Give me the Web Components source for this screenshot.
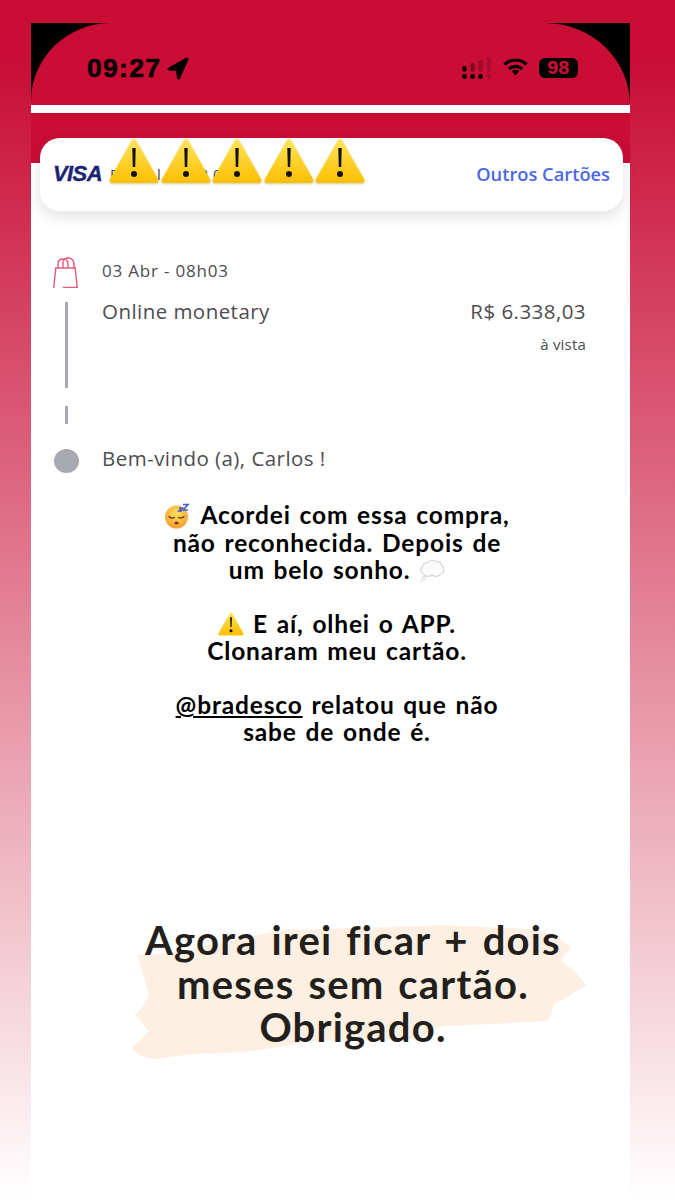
<!DOCTYPE html>
<html lang="pt-BR">
<head>
<meta charset="utf-8">
<title>Story</title>
<style>
  html, body { margin: 0; padding: 0; }
</style>
</head>
<body>

<story-page>
  <status-bar></status-bar>
  <card-header></card-header>
  <tx-row date="03 Abr - 08h03" name="Online monetary" price="R$ 6.338,03" terms="à vista"></tx-row>
  <welcome-row>Bem-vindo (a), Carlos !</welcome-row>
  <story-note>
    <p><sleep-icon></sleep-icon> Acordei com essa compra,<br>não reconhecida. Depois de<br>um belo sonho. <cloud-icon></cloud-icon></p>
    <p><warn-icon size="26"></warn-icon> E aí, olhei o APP.<br>Clonaram meu cartão.</p>
    <p><u>@bradesco</u> relatou que não<br>sabe de onde é.</p>
  </story-note>
  <closing-note>Agora irei ficar + dois<br>meses sem cartão.<br>Obrigado.</closing-note>
</story-page>

<script>
class StoryPage extends HTMLElement {
  constructor() {
    super();
    this.attachShadow({ mode: 'open' }).innerHTML = `
      <style>
        :host { display: block; width: 675px; height: 1200px; overflow: hidden;
                background: linear-gradient(#c90d35 0, #c90d35 60px, #ffffff 1200px);
                padding: 23px 45px 0 31px; box-sizing: border-box; }
        .screen { width: 599px; height: 1177px; background: #fff; }
      </style>
      <div class="screen"><slot></slot></div>`;
  }
}

class StatusBar extends HTMLElement {
  constructor() {
    super();
    this.attachShadow({ mode: 'open' }).innerHTML = `
      <style>
        :host { display: block; background: #000; border-bottom: 8px solid #fff; }
        .bar { height: 82px; background: #c90d35; border-radius: 80px 85px 0 0 / 78px 82px 0 0;
               display: flex; align-items: flex-start; padding: 30px 52px 0 56px; box-sizing: border-box; }
        .time { font: bold 26.5px/30px "Liberation Sans", sans-serif; color: #000; letter-spacing: 1.3px;
                -webkit-text-stroke: .5px #000; }
        .arrow { margin: 4px 0 0 6px; }
        .right { margin-left: auto; display: flex; align-items: flex-start; gap: 11px; margin-top: 5px; }
        .batt { width: 39px; height: 20px; background: #000; border-radius: 6px; color: #c90d35;
                font: bold 19px/20px "Liberation Sans", sans-serif; text-align: center; letter-spacing: .5px;
                -webkit-text-stroke: .3px #c90d35; }
      </style>
      <div class="bar">
        <span class="time">09:27</span>
        <svg class="arrow" width="22" height="23" viewBox="0 0 21 22">
          <path d="M19 2 L2 11.500 L10 12 L11 20 Z" fill="#000" stroke="#000" stroke-width="3" stroke-linejoin="round"/>
        </svg>
        <div class="right">
          <svg width="30" height="24" viewBox="0 0 30 24" style="margin-top:-1px">
            <g fill="#000">
              <circle cx="2.500" cy="19.500" r="2.400"/><circle cx="10.500" cy="19.500" r="2.400"/><circle cx="18.500" cy="19.500" r="2.400"/>
              <rect x="0.500" y="9" width="4" height="5.500" rx="1.500"/>
            </g>
            <circle cx="27" cy="19.500" r="2.400" fill="#8a0a25" opacity=".55"/>
            <rect x="8.500" y="6" width="4" height="8.500" rx="1.500" fill="#7a0a22"/>
            <rect x="16.500" y="3" width="4" height="11.500" rx="1.500" fill="#9a0b2b"/>
            <rect x="25" y="0" width="4" height="14.500" rx="1.500" fill="#a80c2e"/>
          </svg>
          <svg width="25" height="18" viewBox="0 0 25 18">
            <g fill="none" stroke="#000" stroke-width="3.200">
              <path d="M1.500 6.500 C7.500 0.500 17.500 0.500 23.500 6.500"/>
              <path d="M6 11 C9.500 7.500 15.500 7.500 19 11"/>
            </g>
            <path d="M8.800 13 C11 11.300 14 11.300 16.200 13 L12.500 17.500 Z" fill="#000"/>
          </svg>
          <span class="batt">98</span>
        </div>
      </div>`;
  }
}

class CardHeader extends HTMLElement {
  constructor() {
    super();
    this.attachShadow({ mode: 'open' }).innerHTML = `
      <style>
        :host { display: block; padding: 25px 7px 0 9px; background: linear-gradient(#c90d35 50px, #fff 50px); }
        .card { position: relative; height: 73px; background: #fff; border-radius: 20px;
                box-shadow: 0 6px 14px rgba(60,60,70,.14); display: flex; align-items: flex-start;
                padding: 23px 13px 0 13px; box-sizing: border-box; }
        .visa { font: italic bold 22px/26px "Liberation Sans", sans-serif; color: #1a2472; letter-spacing: -.6px;
                -webkit-text-stroke: .4px #1a2472; }
        .num { font: 15px/26px "Open Sans", sans-serif; color: #444; margin-left: 8px; letter-spacing: 4.500px; white-space: nowrap; }
        .link { margin-left: auto; font: 600 18.300px/26px "Open Sans", sans-serif; color: #4a68e2; }
        .warns { position: absolute; left: 69px; top: 0; display: flex; gap: 1.500px;
                 filter: drop-shadow(0 1px 1px rgba(120,90,0,.35)); }
      </style>
      <div class="card">
        <span class="visa">VISA</span>
        <span class="num">Final 2020</span>
        <span class="link">Outros Cartões</span>
        <div class="warns">
          <warn-icon size="50"></warn-icon><warn-icon size="50"></warn-icon><warn-icon size="50"></warn-icon><warn-icon size="50"></warn-icon><warn-icon size="50"></warn-icon>
        </div>
      </div>`;
  }
}

class WarnIcon extends HTMLElement {
  constructor() {
    super();
    let size = this.getAttribute('size') || 26;
    this.attachShadow({ mode: 'open' }).innerHTML = `
      <style>
        :host { display: inline-block; line-height: 0; vertical-align: -3px; }
      </style>
      <svg width="${size}" height="${size * 0.92}" viewBox="0 0 50 46">
        <defs>
          <linearGradient id="g" x1="0" y1="0" x2="0" y2="1">
            <stop offset="0" stop-color="#ffe55a"/><stop offset="1" stop-color="#fdbf00"/>
          </linearGradient>
        </defs>
        <path d="M25 1 C26 1 27 2 27.500 3 L49 41 C50 43 49 45 47 45 L3 45 C1 45 0 43 1 41 L22.500 3 C23 2 24 1 25 1 Z" fill="url(#g)"/>
        <path d="M23.300 10 L26.700 10 L26.200 29 L23.800 29 Z" fill="#111"/>
        <circle cx="25" cy="36" r="3" fill="#111"/>
      </svg>`;
  }
}

class SleepIcon extends HTMLElement {
  constructor() {
    super();
    this.attachShadow({ mode: 'open' }).innerHTML = `
      <style>:host { display: inline-block; line-height: 0; vertical-align: -5px; margin-right: 2px; }</style>
      <svg width="26" height="26" viewBox="0 0 26 26">
        <defs>
          <radialGradient id="f" cx=".5" cy=".35" r=".7">
            <stop offset="0" stop-color="#ffdf5e"/><stop offset="1" stop-color="#f59a2f"/>
          </radialGradient>
        </defs>
        <circle cx="12.500" cy="14" r="11.500" fill="url(#f)"/>
        <path d="M5 13.500 Q7.500 16 10.500 14.500 M14.500 14.500 Q17.500 16 20 13.500" fill="none" stroke="#5b3412" stroke-width="1.300" stroke-linecap="round"/>
        <ellipse cx="12.500" cy="20" rx="2.200" ry="1.600" fill="#7a3a1a"/>
        <path d="M15 5 H18 L15 8 H18 M19 1.500 H24 L19 7 H24" fill="none" stroke="#3f5fc8" stroke-width="1.600"/>
      </svg>`;
  }
}

class CloudIcon extends HTMLElement {
  constructor() {
    super();
    this.attachShadow({ mode: 'open' }).innerHTML = `
      <style>:host { display: inline-block; line-height: 0; vertical-align: -4px; }</style>
      <svg width="26" height="24" viewBox="0 0 26 24">
        <path d="M8 4 C10 0.500 15 0.500 17 3 C20 2 23 4 23 7 C26 9 25 14 22 15 C20 18 15 18 13 16 C10 18 6 18 5 15 C1 14 1 9 3.500 8 C3 5 6 3.500 8 4 Z" fill="#fbfbfb" stroke="#d4d6da" stroke-width="1.200"/>
        <circle cx="5" cy="19" r="1.800" fill="#f6f6f6" stroke="#d4d6da" stroke-width=".8"/>
        <circle cx="2.500" cy="22" r="1.100" fill="#f6f6f6" stroke="#d4d6da" stroke-width=".6"/>
      </svg>`;
  }
}

class TxRow extends HTMLElement {
  constructor() {
    super();
    let date = this.getAttribute('date');
    let name = this.getAttribute('name');
    let price = this.getAttribute('price');
    let terms = this.getAttribute('terms');
    this.attachShadow({ mode: 'open' }).innerHTML = `
      <style>
        :host { display: grid; grid-template-columns: 71px 1fr; height: 192px; padding-top: 46px; box-sizing: content-box;
                font-family: "Open Sans", sans-serif; color: #4c4c52; }
        .rail { display: flex; flex-direction: column; padding-left: 22px; }
        .line { width: 2.500px; background: #a9a9b2; margin-left: 12px; }
        .l1 { height: 86px; margin-top: 14px; }
        .l2 { height: 18px; margin-top: 18px; }
        .body { padding-right: 44px; }
        .date { font-size: 17px; line-height: 22px; margin-top: 3px; letter-spacing: .8px; }
        .main { display: flex; justify-content: space-between; font-size: 20.500px; line-height: 28px; margin-top: 15px; letter-spacing: .45px; }
        .terms { text-align: right; font-size: 15px; line-height: 20px; margin-top: 9px; letter-spacing: .2px; }
      </style>
      <div class="rail">
        <svg width="25" height="31" viewBox="0 0 25 31">
          <g fill="none" stroke="#e8587a" stroke-width="1.400">
            <path d="M0.700 31 L2.800 11 L22.200 11 L24.300 31 M10 30.500 L24 30.500"/>
            <path d="M5 11 V7 C5 3.500 7.500 2 10 2 C13 2 15 4 15 7 V11"/>
            <path d="M10 11 V5.500 C10 2.500 12.500 1 15 1 C19 1 21 4 21 8 V11"/>
          </g>
        </svg>
        <div class="line l1"></div>
        <div class="line l2"></div>
      </div>
      <div class="body">
        <div class="date">${date}</div>
        <div class="main"><span>${name}</span><span>${price}</span></div>
        <div class="terms">${terms}</div>
      </div>`;
  }
}

class WelcomeRow extends HTMLElement {
  constructor() {
    super();
    this.attachShadow({ mode: 'open' }).innerHTML = `
      <style>
        :host { display: flex; align-items: center; height: 24px; padding-left: 23px; gap: 23px;
                font: 20.500px/24px "Open Sans", sans-serif; color: #4c4c52; letter-spacing: .45px; }
        .dot { width: 25px; height: 24px; border-radius: 50%; background: #a9a9b2; flex: none; }
        span { padding-bottom: 7px; }
      </style>
      <div class="dot"></div><span><slot></slot></span>`;
  }
}

class StoryNote extends HTMLElement {
  constructor() {
    super();
    this.attachShadow({ mode: 'open' }).innerHTML = `
      <style>
        :host { display: block; padding: 28px 0 0 0; width: 612px;
                font: bold 24.500px/27px "Lato", sans-serif; color: #000; text-align: center; letter-spacing: .85px; word-spacing: 2px; }
        ::slotted(p) { margin: 0 0 27px 0; }
      </style>
      <slot></slot>`;
  }
}

class ClosingNote extends HTMLElement {
  constructor() {
    super();
    this.attachShadow({ mode: 'open' }).innerHTML = `
      <style>
        :host { display: block; position: relative; margin-top: 174px; width: 644px;
                font: bold 40px/43.500px "Lato", sans-serif; color: #231f1c; text-align: center; letter-spacing: 1.200px; word-spacing: 3px; }
        svg { position: absolute; left: 102px; top: 6px; }
        .text { position: relative; }
      </style>
      <svg width="454" height="135" viewBox="0 0 454 135">
        <path d="M5 31 L26 30 L44 28 L72 22 L100 16 L150 6 L230 4 L310 1 L394 5 L420 10 L437 23 L430 30 L427 36 L440 46 L452 60 L436 70 L420 78 L418 86 L414 95 L360 98 L310 100 L296 106 L277 113 L177 115 L140 122 L110 126 L60 128 L20 133 L8 130 L0 123 L8 116 L17 106 L10 98 L4 90 L12 80 L17 70 L12 52 L7 36 Z" fill="#fdf0e2" stroke="#fdf0e2" stroke-width="2" stroke-linejoin="round"/>
      </svg>
      <div class="text"><slot></slot></div>`;
  }
}

customElements.define('story-page', StoryPage);
customElements.define('status-bar', StatusBar);
customElements.define('card-header', CardHeader);
customElements.define('warn-icon', WarnIcon);
customElements.define('sleep-icon', SleepIcon);
customElements.define('cloud-icon', CloudIcon);
customElements.define('tx-row', TxRow);
customElements.define('welcome-row', WelcomeRow);
customElements.define('story-note', StoryNote);
customElements.define('closing-note', ClosingNote);
</script>
</body>
</html>
